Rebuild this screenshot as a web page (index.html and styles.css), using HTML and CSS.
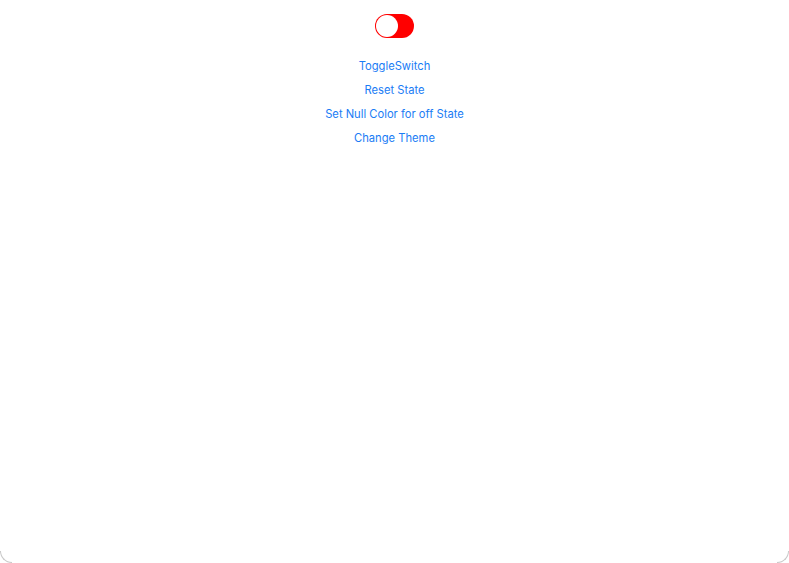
FILE: index.html
```html
<!DOCTYPE html>
<html>
<head>
<meta charset="utf-8">
<link rel="stylesheet" href="styles.css">
</head>
<body>
<div class="window">
  <div class="toggle"><div class="knob"></div></div>
  <div class="links">
    <a class="link">ToggleSwitch</a>
    <a class="link">Reset State</a>
    <a class="link">Set Null Color for off State</a>
    <a class="link">Change Theme</a>
  </div>
  <div class="corner corner-left"></div>
  <div class="corner corner-right"></div>
</div>
</body>
</html>
```
FILE: styles.css
```css
html, body {
  margin: 0;
  padding: 0;
  background: #ffffff;
}
.window {
  position: relative;
  width: 789px;
  height: 563px;
  display: flex;
  flex-direction: column;
  align-items: center;
  font-family: Inter, "Noto Sans", "Liberation Sans", sans-serif;
  overflow: hidden;
}
.toggle {
  margin-top: 14px;
  width: 39px;
  height: 24px;
  border-radius: 12px;
  background: #ff0000;
  box-sizing: border-box;
  padding: 1px;
  display: flex;
  align-items: center;
}
.knob {
  width: 22px;
  height: 22px;
  border-radius: 50%;
  background: #ffffff;
}
.links {
  margin-top: 21px;
  display: flex;
  flex-direction: column;
  align-items: center;
  gap: 9px;
}
.link {
  font-size: 11.2px;
  line-height: 15px;
  color: #1a7cf5;
  cursor: pointer;
}
.corner {
  position: absolute;
  bottom: 0;
  width: 12px;
  height: 12px;
  box-sizing: border-box;
}
.corner-left {
  left: 0;
  border-left: 1px solid #c8c8c8;
  border-bottom: 1px solid #c8c8c8;
  border-bottom-left-radius: 12px;
}
.corner-right {
  right: 0;
  border-right: 1px solid #c8c8c8;
  border-bottom: 1px solid #c8c8c8;
  border-bottom-right-radius: 12px;
}
```
